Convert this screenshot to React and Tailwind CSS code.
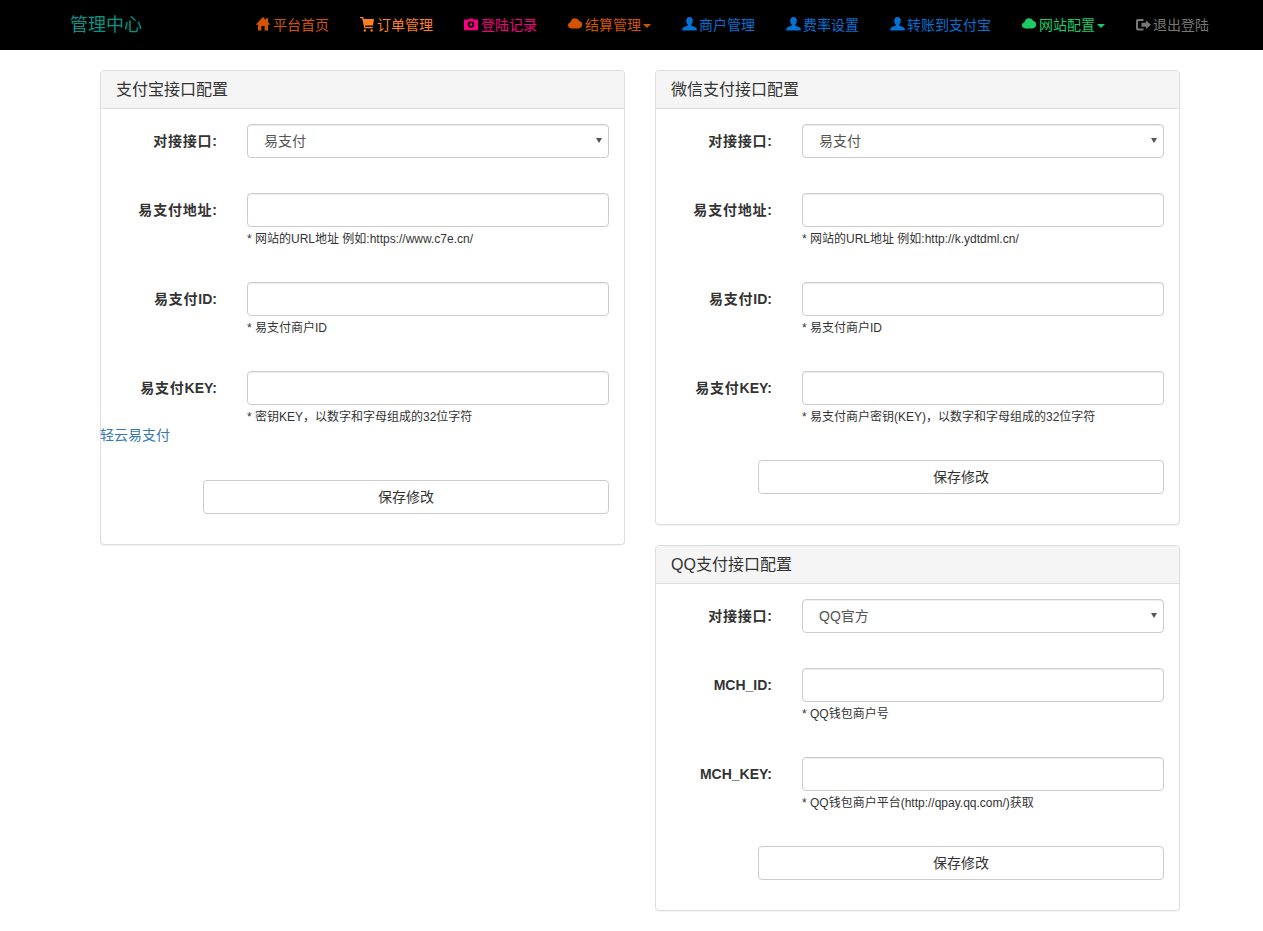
const FONT = "font-['Liberation_Sans','Noto_Sans_CJK_SC',sans-serif]";

const paths = {
  home: <path d="M7 0 10 3V1.2h2V5l2 2.2-.4.6H12V13.500H8.600V9H5.400v4.500H2V7.800H.4L0 7.200 7 0Z" />,
  cart: <path d="M0 0h2.700c.4 0 .7.200.8.600L3.800 2H14l-1 6.500H5l.3 1.500h7.500v1.200H4.300L2.200 1.200H0V0ZM4.800 12.300a1.200 1.200 0 1 1 0 2.400 1.200 1.200 0 0 1 0-2.400Zm6.800 0a1.200 1.200 0 1 1 0 2.400 1.200 1.200 0 0 1 0-2.400Z" />,
  camera: <path d="M4.500 2.400 5.400 1.600h3.200l.9.800H13c.6 0 1 .4 1 1v8.800c0 .6-.4 1-1 1H1c-.6 0-1-.4-1-1V3.400c0-.6.400-1 1-1h3.500ZM7 4.300a3.300 3.300 0 1 0 0 6.600 3.300 3.300 0 0 0 0-6.600Zm0 1.800a1.500 1.500 0 1 1 0 3 1.500 1.500 0 0 1 0-3Z" fillRule="evenodd" />,
  cloud: <path d="M3.200 11.400C1.300 11.400 0 10 0 8.300c0-1.500 1-2.700 2.400-3C3 2.800 4.800 1.200 7 1.200c1.800 0 3.300 1 4 2.600 1.800.2 3.200 1.800 3.200 3.700 0 2.200-1.600 3.900-3.600 3.900H3.200Z" />,
  user: <path d="M7.500 0C5.300 0 4.200 1.600 4.200 3.700c0 1.600.6 3 1.500 3.800v1.100c-1.800.9-4.800 1.500-5.400 3V13.500h14.400v-1.900c-.6-1.500-3.600-2.100-5.400-3V7.500c.9-.8 1.500-2.200 1.500-3.800C10.800 1.600 9.700 0 7.500 0Z" />,
  logout: <path d="M2 2h5.500v2H3a1 1 0 0 0-1 1v5.500a1 1 0 0 0 1 1h4.500v2H2c-1.100 0-2-.9-2-2V4c0-1.100.9-2 2-2Zm8 1.500 5 4.200-5 4.300V9.700H5.500V5.800H10V3.500Z" />,
};

function Icon({ name }) {
  return (
    <svg viewBox="0 0 15 15" className="inline-block w-[15px] h-[15px] ml-px -mr-px fill-current align-[-2px] overflow-visible">
      {paths[name]}
    </svg>
  );
}

const navItems = [
  { icon: "home", label: "平台首页", color: "text-[#d35400]" },
  { icon: "cart", label: "订单管理", color: "text-[#ff7f27]" },
  { icon: "camera", label: "登陆记录", color: "text-[#f5007f]" },
  { icon: "cloud", label: "结算管理", color: "text-[#d35400]", caret: true },
  { icon: "user", label: "商户管理", color: "text-[#0072d6]" },
  { icon: "user", label: "费率设置", color: "text-[#0072d6]" },
  { icon: "user", label: "转账到支付宝", color: "text-[#0072d6]" },
  { icon: "cloud", label: "网站配置", color: "text-[#1ccb65]", caret: true },
  { icon: "logout", label: "退出登陆", color: "text-[#777777]" },
];

function LabelText({ text }) {
  return text.split(/([\u4e00-\u9fff]+)/).map((part, i) =>
    i % 2 === 1 ? (
      <span key={i} className="tracking-[0.8px]">{part}</span>
    ) : (
      part
    )
  );
}

function Field({ label, help, after, children }) {
  return (
    <div>
      <div className="grid grid-cols-[101px_362px] gap-x-[30px]">
        <label className="text-right font-bold text-[14px] leading-5 pt-[7px] text-[#333333]">
          <LabelText text={label} />
        </label>
        <div>
          {children}
          {help && <p className="h-5 text-[12px] leading-5 pt-[2px] text-[#333333]">{help}</p>}
        </div>
      </div>
      {after}
      <div className="h-[35px]" />
    </div>
  );
}

function TextInput() {
  return (
    <input
      type="text"
      className="block w-full h-[34px] px-3 bg-white border border-[#cccccc] rounded shadow-[inset_0_1px_1px_rgba(0,0,0,0.075)] outline-none text-[14px]"
    />
  );
}

function Select({ value }) {
  return (
    <div className="relative">
      <select
        defaultValue={value}
        className={`block w-full h-[34px] pl-4 pr-3 appearance-none bg-white border border-[#cccccc] rounded shadow-[inset_0_1px_1px_rgba(0,0,0,0.075)] outline-none text-[14px] text-[#555555] ${FONT}`}
      >
        <option>{value}</option>
      </select>
      <span className="absolute right-[7px] top-[14px] w-0 h-0 border-x-[3px] border-x-transparent border-t-[5px] border-t-[#555555] pointer-events-none" />
    </div>
  );
}

function Panel({ title, children }) {
  return (
    <section className="mb-5 border border-[#dddddd] rounded bg-white shadow-[0_1px_1px_rgba(0,0,0,0.05)]">
      <h3 className="h-[38px] px-[15px] bg-[#f5f5f5] border-b border-[#dddddd] rounded-t-[3px] text-[16px] leading-[37px] font-normal text-[#333333]">
        {title}
      </h3>
      <form className="pt-[15px] px-[15px] pb-[30px]">
        {children}
        <div className="pl-[87px]">
          <button type="button" className="block w-full h-[34px] bg-white border border-[#cccccc] rounded text-[14px] text-[#333333]">
            保存修改
          </button>
        </div>
      </form>
    </section>
  );
}

export default function App() {
  return (
    <div className={`min-h-[931px] bg-white text-[14px] leading-5 text-[#333333] ${FONT}`}>
      <nav className="flex items-center h-[50px] bg-black pl-[70px] pr-[39px]">
        <a className="text-[18px] leading-5 text-[#009688]">管理中心</a>
        <ul className="flex ml-auto">
          {navItems.map((item) => (
            <li key={item.label} className={`px-[15px] text-[14px] leading-5 whitespace-nowrap ${item.color}`}>
              <Icon name={item.icon} />
              <span className="ml-[3px]">{item.label}</span>
              {item.caret && (
                <span className="inline-block ml-[2px] align-middle w-0 h-0 border-x-4 border-x-transparent border-t-4 border-t-current" />
              )}
            </li>
          ))}
        </ul>
      </nav>

      <main className="flex items-start gap-[30px] w-[1080px] ml-[100px] pt-5">
        <div className="w-[525px]">
          <Panel title="支付宝接口配置">
            <Field label="对接接口:"><Select value="易支付" /></Field>
            <Field label="易支付地址:" help="* 网站的URL地址 例如:https://www.c7e.cn/"><TextInput /></Field>
            <Field label="易支付ID:" help="* 易支付商户ID"><TextInput /></Field>
            <Field
              label="易支付KEY:"
              help="* 密钥KEY，以数字和字母组成的32位字符"
              after={<a className="block -ml-4 text-[14px] leading-5 text-[#337ab7]">轻云易支付</a>}
            >
              <TextInput />
            </Field>
          </Panel>
        </div>
        <div className="w-[525px]">
          <Panel title="微信支付接口配置">
            <Field label="对接接口:"><Select value="易支付" /></Field>
            <Field label="易支付地址:" help="* 网站的URL地址 例如:http://k.ydtdml.cn/"><TextInput /></Field>
            <Field label="易支付ID:" help="* 易支付商户ID"><TextInput /></Field>
            <Field label="易支付KEY:" help="* 易支付商户密钥(KEY)，以数字和字母组成的32位字符"><TextInput /></Field>
          </Panel>
          <Panel title="QQ支付接口配置">
            <Field label="对接接口:"><Select value="QQ官方" /></Field>
            <Field label="MCH_ID:" help="* QQ钱包商户号"><TextInput /></Field>
            <Field label="MCH_KEY:" help="* QQ钱包商户平台(http://qpay.qq.com/)获取"><TextInput /></Field>
          </Panel>
        </div>
      </main>
    </div>
  );
}
